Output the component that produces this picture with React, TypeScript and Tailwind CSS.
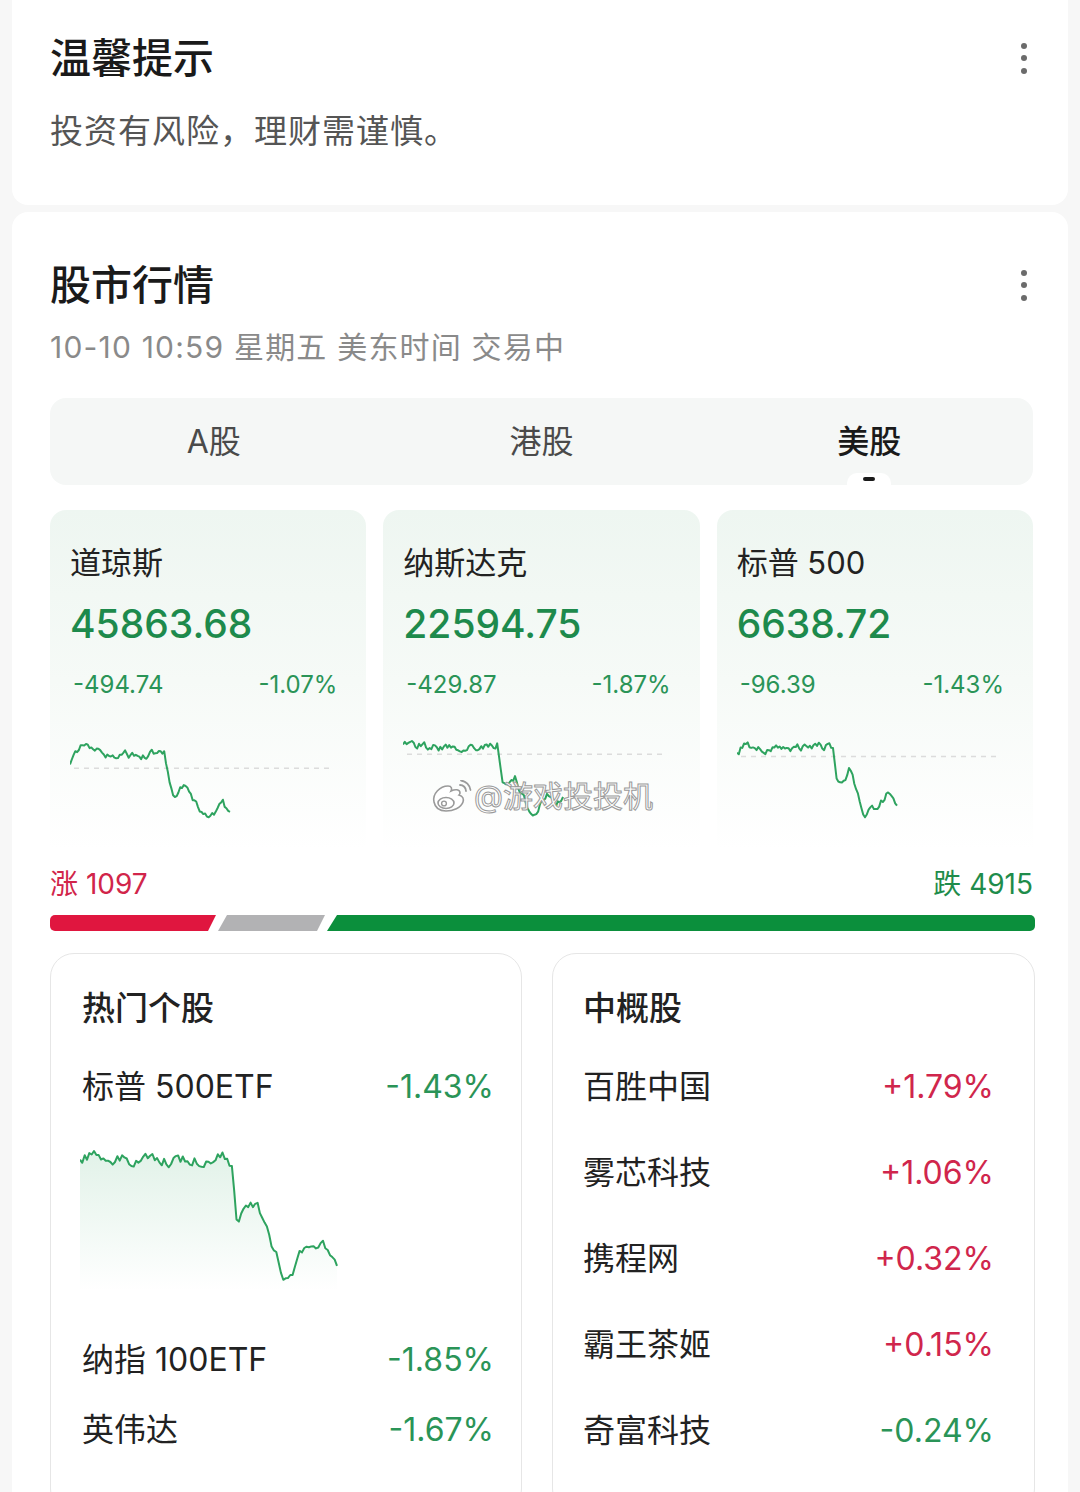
import { useMemo } from "react"

type Key = [number, number]

function rng(seed: number) {
  let s = seed
  return () => {
    s |= 0
    s = (s + 0x6d2b79f5) | 0
    let t = Math.imul(s ^ (s >>> 15), 1 | s)
    t = (t + Math.imul(t ^ (t >>> 7), 61 | t)) ^ t
    return ((t ^ (t >>> 14)) >>> 0) / 4294967296
  }
}

// random walk around a rough outline of the day
function buildPoints(keys: Key[], n: number, seed: number, w: number, h: number, top: number, amp: number) {
  const r = rng(seed)
  const pts: [number, number][] = []
  let noise = 0
  for (let i = 0; i <= n; i++) {
    const fx = i / n
    let k = 0
    while (k < keys.length - 2 && keys[k + 1][0] < fx) k++
    const [x0, y0] = keys[k]
    const [x1, y1] = keys[k + 1]
    const t = Math.min(1, Math.max(0, (fx - x0) / (x1 - x0 || 1)))
    noise = noise * 0.55 + (r() - 0.5) * amp
    const y = Math.min(1, Math.max(0, y0 + (y1 - y0) * t + noise))
    pts.push([fx * w, top + y * h])
  }
  return pts
}

function toPath(pts: [number, number][]) {
  return pts.map((p, i) => `${i ? "L" : "M"}${p[0].toFixed(1)},${p[1].toFixed(1)}`).join(" ")
}

const indices = [
  {
    name: "道琼斯",
    value: "45863.68",
    chg: "-494.74",
    pct: "-1.07%",
    base: 0.35,
    seed: 11,
    keys: [[0, 0.3], [0.03, 0.12], [0.1, 0.04], [0.16, 0.1], [0.22, 0.22], [0.32, 0.16], [0.45, 0.2], [0.57, 0.14], [0.59, 0.16], [0.62, 0.55], [0.66, 0.72], [0.72, 0.55], [0.77, 0.75], [0.83, 0.97], [0.9, 0.9], [0.95, 0.78], [1, 0.95]] as Key[],
  },
  {
    name: "纳斯达克",
    value: "22594.75",
    chg: "-429.87",
    pct: "-1.87%",
    base: 0.17,
    seed: 23,
    keys: [[0, 0.08], [0.05, 0.04], [0.15, 0.07], [0.3, 0.08], [0.45, 0.06], [0.59, 0.05], [0.62, 0.5], [0.66, 0.62], [0.7, 0.5], [0.76, 0.75], [0.8, 0.98], [0.85, 0.85], [0.9, 0.7], [0.95, 0.82], [1, 0.75]] as Key[],
  },
  {
    name: "标普 500",
    value: "6638.72",
    chg: "-96.39",
    pct: "-1.43%",
    base: 0.2,
    seed: 37,
    keys: [[0, 0.15], [0.05, 0.04], [0.12, 0.08], [0.2, 0.1], [0.35, 0.08], [0.58, 0.06], [0.6, 0.08], [0.62, 0.45], [0.66, 0.55], [0.7, 0.35], [0.74, 0.6], [0.8, 0.95], [0.85, 0.85], [0.88, 0.9], [0.93, 0.7], [0.97, 0.75], [1, 0.88]] as Key[],
  },
]

const bigKeys: Key[] = [[0, 0.1], [0.03, 0.04], [0.1, 0.02], [0.2, 0.07], [0.4, 0.07], [0.57, 0.05], [0.59, 0.1], [0.61, 0.55], [0.64, 0.45], [0.69, 0.42], [0.73, 0.6], [0.8, 0.95], [0.84, 0.88], [0.87, 0.72], [0.92, 0.76], [0.96, 0.72], [1, 0.86]]

const hotStocks = [
  { name: "纳指 100ETF", pct: "-1.85%" },
  { name: "英伟达", pct: "-1.67%" },
]

const chinaStocks = [
  { name: "百胜中国", pct: "+1.79%", up: true },
  { name: "雾芯科技", pct: "+1.06%", up: true },
  { name: "携程网", pct: "+0.32%", up: true },
  { name: "霸王茶姬", pct: "+0.15%", up: true },
  { name: "奇富科技", pct: "-0.24%", up: false },
]

function Dots() {
  return (
    <div className="flex w-[18px] flex-col items-center gap-[6.5px]">
      <span className="h-[6px] w-[6px] rounded-full bg-[#6b6b6b]" />
      <span className="h-[6px] w-[6px] rounded-full bg-[#6b6b6b]" />
      <span className="h-[6px] w-[6px] rounded-full bg-[#6b6b6b]" />
    </div>
  )
}

function Spark({ keys, seed, base }: { keys: Key[]; seed: number; base: number }) {
  const d = useMemo(() => toPath(buildPoints(keys, 90, seed, 160, 78, 6, 0.09)), [keys, seed])
  const by = 6 + base * 78
  return (
    <svg width="262" height="90" viewBox="0 0 262 90" className="block">
      <line x1="4" y1={by} x2="260" y2={by} stroke="#dcdcdc" strokeWidth="1.5" strokeDasharray="5 5" />
      <path d={d} fill="none" stroke="#2ea35f" strokeWidth="2" strokeLinejoin="round" />
    </svg>
  )
}

function BigChart() {
  const pts = useMemo(() => buildPoints(bigKeys, 110, 53, 257, 134, 5, 0.08), [])
  const line = toPath(pts)
  const area = `${line} L257,145 L0,145 Z`
  return (
    <svg width="260" height="145" viewBox="0 0 260 145" className="block">
      <defs>
        <linearGradient id="bigfill" x1="0" y1="0" x2="0" y2="1">
          <stop offset="0" stopColor="#2ea35f" stopOpacity="0.14" />
          <stop offset="1" stopColor="#2ea35f" stopOpacity="0" />
        </linearGradient>
      </defs>
      <path d={area} fill="url(#bigfill)" />
      <path d={line} fill="none" stroke="#2ea35f" strokeWidth="2" strokeLinejoin="round" />
    </svg>
  )
}

function BreadthBar() {
  return (
    <svg width="985" height="16" viewBox="0 0 985 16" className="block">
      <path d="M5,0 H166 L158,16 H5 A5,5 0 0 1 0,11 V5 A5,5 0 0 1 5,0 Z" fill="#e0163f" />
      <path d="M177,0 H275 L267,16 H168 Z" fill="#b2b2b4" />
      <path d="M287,0 H980 A5,5 0 0 1 985,5 V11 A5,5 0 0 1 980,16 H277 Z" fill="#0b8f3c" />
    </svg>
  )
}

function WeiboMark() {
  return (
    <div className="pointer-events-none absolute left-[378px] top-[270px] flex items-center gap-[2px]">
      <svg width="44" height="32" viewBox="0 0 44 32">
        <path d="M6,22 C4,14 12,6 20,6 C24,6 24,9 23,11 C27,9 32,9 32,13 C32,14 31,15 31,15 C35,16 36,19 35,22 C33,28 25,31 18,31 C10,31 7,27 6,22 Z" fill="#fff" stroke="#9a9a9a" strokeWidth="1.6" />
        <ellipse cx="18" cy="23" rx="8" ry="5.5" fill="#fff" stroke="#9a9a9a" strokeWidth="1.6" />
        <circle cx="16" cy="23.5" r="2.4" fill="none" stroke="#9a9a9a" strokeWidth="1.4" />
        <path d="M32,5 A6,6 0 0 1 38,11" fill="none" stroke="#9a9a9a" strokeWidth="1.8" strokeLinecap="round" />
        <path d="M33,0.5 A11,11 0 0 1 42.5,10" fill="none" stroke="#9a9a9a" strokeWidth="1.8" strokeLinecap="round" />
      </svg>
      <span className="text-[30px] leading-none text-white [-webkit-text-stroke:1px_#9a9a9a]">@游戏投投机</span>
    </div>
  )
}

export default function App() {
  return (
    <div
      className="min-h-[1492px] w-[1080px] overflow-hidden bg-[#f7f7f7]"
      style={{ fontFamily: '"Inter", "Noto Sans CJK SC", sans-serif' }}
    >
      {/* 温馨提示 */}
      <div className="mx-[12px] rounded-b-[16px] bg-white pb-[54px] pl-[38px] pr-[35px] pt-[34px]">
        <div className="flex h-[48px] items-center justify-between">
          <h2 className="text-[41px] font-medium leading-[48px] text-[#1a1a1a]">温馨提示</h2>
          <Dots />
        </div>
        <p className="mt-[29px] text-[33px] leading-[40px] tracking-[1px] text-[#555555]">投资有风险，理财需谨慎。</p>
      </div>

      {/* 股市行情 */}
      <div className="mx-[12px] mt-[7px] rounded-t-[16px] bg-white pl-[38px] pr-[35px] pt-[49px]">
        <div className="flex h-[48px] items-center justify-between">
          <h2 className="text-[41px] font-medium leading-[48px] text-[#1a1a1a]">股市行情</h2>
          <Dots />
        </div>
        <p className="mt-[20px] text-[30px] leading-[36px] tracking-[1.2px] text-[#8a8a8a]">10-10 10:59 星期五 美东时间 交易中</p>

        {/* tabs */}
        <div className="mt-[33px] grid h-[87px] grid-cols-3 rounded-[16px] bg-[#f5f7f6]">
          <div className="flex items-center justify-center text-[32px] text-[#4a4a4a]">A股</div>
          <div className="flex items-center justify-center text-[32px] text-[#4a4a4a]">港股</div>
          <div className="relative flex items-center justify-center text-[32px] font-medium text-[#1a1a1a]">
            美股
            <div className="absolute bottom-0 left-1/2 flex h-[12px] w-[44px] -translate-x-1/2 items-center justify-center rounded-t-[10px] bg-white">
              <span className="h-[4px] w-[12px] rounded-full bg-[#1a1a1a]" />
            </div>
          </div>
        </div>

        {/* index cards */}
        <div className="relative mt-[25px] grid grid-cols-3 gap-[17px]">
          {indices.map((it) => (
            <div
              key={it.name}
              className="h-[340px] rounded-t-[16px] bg-gradient-to-b from-[#eef6f1] via-[#f6faf7] to-white pl-[20px] pr-[29px] pt-[33px]"
            >
              <div className="text-[31px] leading-[40px] text-[#222222]">{it.name}</div>
              <div className="mt-[15px] text-[39px] font-medium leading-[52px] text-[#1d8a4c]">{it.value}</div>
              <div className="mt-[20px] flex justify-between pl-[3px] text-[24px] leading-[30px] text-[#2a9457]">
                <span>{it.chg}</span>
                <span>{it.pct}</span>
              </div>
              <div className="mt-[35px]">
                <Spark keys={it.keys} seed={it.seed} base={it.base} />
              </div>
            </div>
          ))}
          <WeiboMark />
        </div>

        {/* breadth */}
        <div className="mt-[16px] flex h-[36px] items-center justify-between text-[28px]">
          <span className="text-[#d1254a]">涨 1097</span>
          <span className="text-[#1f8c4b]">跌 4915</span>
        </div>
        <div className="mt-[13px]">
          <BreadthBar />
        </div>

        {/* stock lists */}
        <div className="mt-[22px] grid grid-cols-[472px_483px] gap-[30px]">
          <div className="h-[560px] rounded-[24px] border-[1.5px] border-[#e6e6e6] pl-[31px] pr-[27px] pt-[32px]">
            <div className="text-[33px] font-medium leading-[44px] text-[#222222]">热门个股</div>
            <div className="mt-[35px] flex h-[44px] items-center justify-between text-[32px]">
              <span className="text-[#222222]">标普 500ETF</span>
              <span className="text-[#2a9457]">-1.43%</span>
            </div>
            <div className="mt-[37px] -ml-[2px]">
              <BigChart />
            </div>
            <div className="mt-[47px] flex h-[44px] items-center justify-between text-[32px]">
              <span className="text-[#222222]">{hotStocks[0].name}</span>
              <span className="text-[#2a9457]">{hotStocks[0].pct}</span>
            </div>
            <div className="mt-[26px] flex h-[44px] items-center justify-between text-[32px]">
              <span className="text-[#222222]">{hotStocks[1].name}</span>
              <span className="text-[#2a9457]">{hotStocks[1].pct}</span>
            </div>
          </div>

          <div className="h-[560px] rounded-[24px] border-[1.5px] border-[#e6e6e6] pl-[30px] pr-[40px] pt-[32px]">
            <div className="text-[33px] font-medium leading-[44px] text-[#222222]">中概股</div>
            <div className="mt-[14px] flex flex-col">
              {chinaStocks.map((s) => (
                <div key={s.name} className="flex h-[86px] items-center justify-between text-[32px]">
                  <span className="text-[#222222]">{s.name}</span>
                  <span className={s.up ? "text-[#d0264c]" : "text-[#2a9457]"}>{s.pct}</span>
                </div>
              ))}
            </div>
          </div>
        </div>
      </div>
    </div>
  )
}
